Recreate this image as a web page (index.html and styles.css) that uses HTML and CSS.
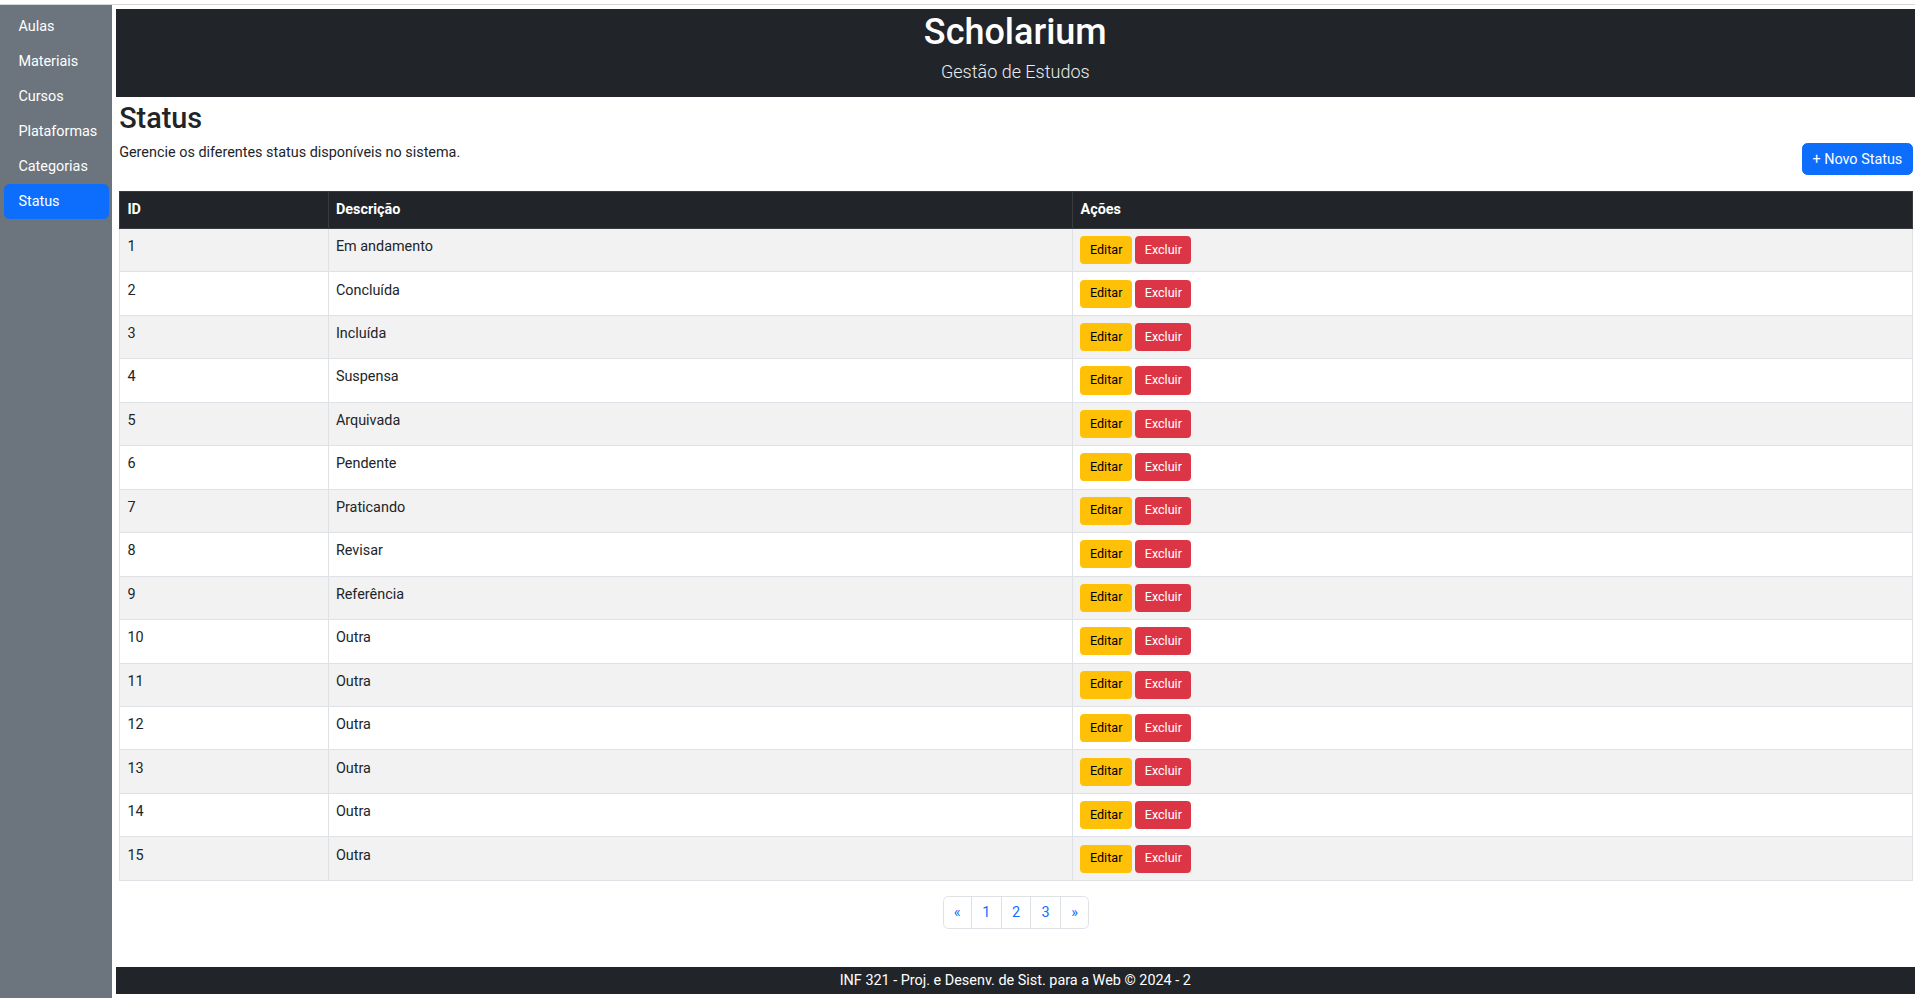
FILE: index.html
```html
<!DOCTYPE html>
<html lang="pt-BR">
<head>
<meta charset="utf-8">
<title>Scholarium - Status</title>
<link rel="stylesheet" href="styles.css">
</head>
<body>
<div class="topbar"></div>
<div class="layout">
  <nav class="sidebar">
    <a class="nav-link" href="#">Aulas</a>
    <a class="nav-link" href="#">Materiais</a>
    <a class="nav-link" href="#">Cursos</a>
    <a class="nav-link" href="#">Plataformas</a>
    <a class="nav-link" href="#">Categorias</a>
    <a class="nav-link active" href="#">Status</a>
  </nav>
  <div class="main">
    <header class="site-header">
      <h1>Scholarium</h1>
      <p class="lead">Gestão de Estudos</p>
    </header>
    <section class="content">
      <h2 class="page-title">Status</h2>
      <div class="intro-row">
        <p>Gerencie os diferentes status disponíveis no sistema.</p>
        <button class="btn btn-new">+ Novo Status</button>
      </div>
      <table class="data">
        <colgroup><col class="c-id"><col class="c-desc"><col></colgroup>
        <thead>
          <tr><th>ID</th><th>Descrição</th><th>Ações</th></tr>
        </thead>
        <tbody>
          <tr><td>1</td><td>Em andamento</td><td><div class="actions"><button class="btn btn-sm btn-warning">Editar</button><button class="btn btn-sm btn-danger">Excluir</button></div></td></tr>
          <tr><td>2</td><td>Concluída</td><td><div class="actions"><button class="btn btn-sm btn-warning">Editar</button><button class="btn btn-sm btn-danger">Excluir</button></div></td></tr>
          <tr><td>3</td><td>Incluída</td><td><div class="actions"><button class="btn btn-sm btn-warning">Editar</button><button class="btn btn-sm btn-danger">Excluir</button></div></td></tr>
          <tr><td>4</td><td>Suspensa</td><td><div class="actions"><button class="btn btn-sm btn-warning">Editar</button><button class="btn btn-sm btn-danger">Excluir</button></div></td></tr>
          <tr><td>5</td><td>Arquivada</td><td><div class="actions"><button class="btn btn-sm btn-warning">Editar</button><button class="btn btn-sm btn-danger">Excluir</button></div></td></tr>
          <tr><td>6</td><td>Pendente</td><td><div class="actions"><button class="btn btn-sm btn-warning">Editar</button><button class="btn btn-sm btn-danger">Excluir</button></div></td></tr>
          <tr><td>7</td><td>Praticando</td><td><div class="actions"><button class="btn btn-sm btn-warning">Editar</button><button class="btn btn-sm btn-danger">Excluir</button></div></td></tr>
          <tr><td>8</td><td>Revisar</td><td><div class="actions"><button class="btn btn-sm btn-warning">Editar</button><button class="btn btn-sm btn-danger">Excluir</button></div></td></tr>
          <tr><td>9</td><td>Referência</td><td><div class="actions"><button class="btn btn-sm btn-warning">Editar</button><button class="btn btn-sm btn-danger">Excluir</button></div></td></tr>
          <tr><td>10</td><td>Outra</td><td><div class="actions"><button class="btn btn-sm btn-warning">Editar</button><button class="btn btn-sm btn-danger">Excluir</button></div></td></tr>
          <tr><td>11</td><td>Outra</td><td><div class="actions"><button class="btn btn-sm btn-warning">Editar</button><button class="btn btn-sm btn-danger">Excluir</button></div></td></tr>
          <tr><td>12</td><td>Outra</td><td><div class="actions"><button class="btn btn-sm btn-warning">Editar</button><button class="btn btn-sm btn-danger">Excluir</button></div></td></tr>
          <tr><td>13</td><td>Outra</td><td><div class="actions"><button class="btn btn-sm btn-warning">Editar</button><button class="btn btn-sm btn-danger">Excluir</button></div></td></tr>
          <tr><td>14</td><td>Outra</td><td><div class="actions"><button class="btn btn-sm btn-warning">Editar</button><button class="btn btn-sm btn-danger">Excluir</button></div></td></tr>
          <tr><td>15</td><td>Outra</td><td><div class="actions"><button class="btn btn-sm btn-warning">Editar</button><button class="btn btn-sm btn-danger">Excluir</button></div></td></tr>
        </tbody>
      </table>
      <nav class="pager">
        <ul>
          <li><a class="page-link first" href="#">«</a></li>
          <li><a class="page-link" href="#">1</a></li>
          <li><a class="page-link" href="#">2</a></li>
          <li><a class="page-link" href="#">3</a></li>
          <li><a class="page-link last" href="#">»</a></li>
        </ul>
      </nav>
    </section>
    <footer class="site-footer">INF 321 - Proj. e Desenv. de Sist. para a Web © 2024 - 2</footer>
  </div>
</div>
</body>
</html>
```
FILE: styles.css
```css
html, body {
  margin: 0;
  height: 100%;
}
body {
  font-family: Roboto, "Liberation Sans", sans-serif;
  font-size: 14.4px;
  line-height: 1.5;
  color: #212529;
  background: #fff;
  overflow: hidden;
}
.topbar {
  height: 4px;
  border-bottom: 1px solid #d6d6d6;
  background: #fff;
}
.layout {
  display: flex;
  height: 993px;
}
.sidebar {
  width: 112px;
  flex: none;
  box-sizing: border-box;
  background: #6c757d;
  padding: 4.5px 3px 0 4px;
  display: flex;
  flex-direction: column;
}
.nav-link {
  display: block;
  padding: 6.7px 14.4px;
  line-height: 21.6px;
  color: #fff;
  text-decoration: none;
  border-radius: 5.4px;
}
.nav-link.active {
  background: #0d6efd;
}
.main {
  flex: 1;
  min-width: 0;
  margin: 3.6px 0 3.6px 3.6px;
  display: flex;
  flex-direction: column;
}
.site-header {
  background: #212529;
  color: #fff;
  text-align: center;
  padding: 2px 0 12.7px;
}
.site-header h1 {
  margin: 0 0 4px;
  font-size: 36px;
  font-weight: 500;
  line-height: 1.2;
}
.lead {
  margin: 0;
  font-size: 18px;
  font-weight: 300;
  line-height: 1.5;
  color: #e9ecef;
}
.content {
  padding: 3.6px 2.3px 0 3.6px;
}
.page-title {
  margin: 0 0 6.5px;
  font-size: 28.8px;
  font-weight: 500;
  line-height: 1.2;
}
.intro-row {
  display: flex;
  justify-content: space-between;
  align-items: flex-start;
  margin-bottom: 15.4px;
}
.intro-row p {
  margin: 0;
}
.btn {
  font-family: inherit;
  border: 1px solid transparent;
  cursor: pointer;
}
.btn-new {
  background: #0d6efd;
  border-color: #0d6efd;
  color: #fff;
  font-size: 14.4px;
  line-height: 21.6px;
  padding: 4.4px 9.4px;
  border-radius: 5.4px;
  margin-top: 1px;
}
.data {
  width: 100%;
  border-collapse: collapse;
  table-layout: fixed;
}
.c-id { width: 208.5px; }
.c-desc { width: 744.6px; }
.data th, .data td {
  border: 1px solid #dee2e6;
  padding: 7.2px;
  text-align: left;
  vertical-align: top;
}
.data thead th {
  background: #212529;
  color: #fff;
  border-color: #373b3e;
  font-weight: 700;
}
.data tbody tr:nth-child(odd) td {
  background: #f2f2f2;
}
.actions {
  display: flex;
  gap: 3.3px;
}
.btn-sm {
  font-size: 12.6px;
  line-height: 18.9px;
  padding: 3.6px 8.5px;
  border-radius: 3.6px;
}
.btn-warning {
  background: #ffc107;
  border-color: #ffc107;
  color: #000;
}
.btn-danger {
  background: #dc3545;
  border-color: #dc3545;
  color: #fff;
}
.pager ul {
  list-style: none;
  display: flex;
  justify-content: center;
  margin: 15px 0 0;
  padding: 0;
}
.page-link {
  display: block;
  padding: 4.9px 10.3px;
  line-height: 21.6px;
  border: 1px solid #dee2e6;
  margin-left: -1px;
  color: #0d6efd;
  text-decoration: none;
}
.page-link.first {
  margin-left: 0;
  border-radius: 5.4px 0 0 5.4px;
}
.page-link.last {
  border-radius: 0 5.4px 5.4px 0;
}
.site-footer {
  margin-top: auto;
  background: #212529;
  color: #fff;
  text-align: center;
  padding: 3px 0;
  line-height: 21.6px;
}
```
